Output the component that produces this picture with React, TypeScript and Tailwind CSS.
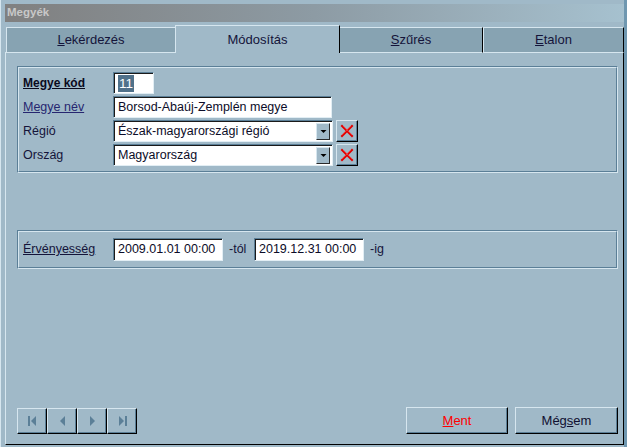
const font = "font-['Liberation_Sans',Arial,sans-serif]";

const Raised = ({ className = "", children }: { className?: string; children?: React.ReactNode }) => (
  <div
    className={`flex items-center justify-center border-t border-l border-t-[#d6e6ef] border-l-[#d6e6ef] border-r border-b border-r-black border-b-black shadow-[inset_-1px_-1px_0_#5b7f97] bg-[#a0b9c8] ${className}`}
  >
    {children}
  </div>
);

const Field = ({ className = "", children }: { className?: string; children?: React.ReactNode }) => (
  <div
    className={`flex items-center bg-white border-t border-l border-t-[#5b7f97] border-l-[#5b7f97] border-r border-b border-r-[#e2eef4] border-b-[#e2eef4] shadow-[inset_1px_1px_0_#1a1a1a] pl-[4px] text-[12.5px] text-[#0c0c28] whitespace-nowrap ${className}`}
  >
    {children}
  </div>
);

const Group = ({ className = "", children }: { className?: string; children?: React.ReactNode }) => (
  <div className="border-t border-l border-t-[#5b7f97] border-l-[#5b7f97] border-r border-b border-r-[#d6e6ef] border-b-[#d6e6ef]">
    <div className={`border-t border-l border-t-[#d6e6ef] border-l-[#d6e6ef] border-r border-b border-r-[#5b7f97] border-b-[#5b7f97] ${className}`}>
      {children}
    </div>
  </div>
);

const Combo = ({ value }: { value: string }) => (
  <div className="flex items-center">
    <Field className="w-[220px] h-[22px] pr-[2px] justify-between">
      <span>{value}</span>
      <div className="w-[14px] h-[17px] flex items-center justify-center border-t border-l border-t-[#d6e6ef] border-l-[#d6e6ef] border-r border-b border-r-[#2a2a2a] border-b-[#2a2a2a] bg-[#a0b9c8]">
        <svg width="7" height="5" viewBox="0 0 7 5">
          <path d="M0.5 1h6l-3 3z" fill="#000" />
        </svg>
      </div>
    </Field>
    <Raised className="ml-[3px] w-[22px] h-[22px]">
      <svg width="14" height="14" viewBox="0 0 14 14">
        <path d="M2 2l10 10M12 2L2 12" stroke="#e00000" strokeWidth="2" strokeLinecap="square" />
        <path d="M3 2l9 9M11 2L2 11" stroke="#ff5050" strokeWidth="0.6" />
      </svg>
    </Raised>
  </div>
);

const Row = ({ label, children }: { label: React.ReactNode; children: React.ReactNode }) => (
  <div className="flex items-center h-[22px]">
    <div className="w-[90px] text-[12.5px]">{label}</div>
    {children}
  </div>
);

const NavIcon = ({ kind }: { kind: "first" | "prev" | "next" | "last" }) => (
  <svg width="9" height="10" viewBox="0 0 9 10">
    {kind === "first" && <><rect x="0" y="0" width="2" height="10" fill="#5b7f97" /><path d="M8 0v10L3 5z" fill="#5b7f97" /></>}
    {kind === "prev" && <path d="M7 0v10L2 5z" fill="#5b7f97" />}
    {kind === "next" && <path d="M2 0v10L7 5z" fill="#5b7f97" />}
    {kind === "last" && <><path d="M1 0v10L6 5z" fill="#5b7f97" /><rect x="7" y="0" width="2" height="10" fill="#5b7f97" /></>}
  </svg>
);

export default function App() {
  return (
    <div className={`w-[627px] h-[447px] bg-[#a0b9c8] flex flex-col border-l border-l-[#d6e6ef] border-r-[3px] border-r-[#6f97b0] pl-[4px] pt-[4px] pb-[2px] ${font} text-[#14143a]`}>
      {/* title bar */}
      <div className="h-[18px] flex items-center pl-[2px] bg-gradient-to-r from-[#808080] via-[#8d9ba4] to-[#a6c1cf] text-[11.5px] font-bold text-[#c8c8c8]">
        Megyék
      </div>

      {/* tabs */}
      <div className="mt-[3px] h-[28px] flex items-end">
        <div className="w-[1px] h-[1px] bg-[#d6e6ef]" />
        <div className="w-[169px] h-[26px] bg-[#87a3b2] border-t border-l border-t-[#d6e6ef] border-l-[#d6e6ef] border-b border-b-[#d6e6ef] flex items-center justify-center text-[13px]">
          <span><span className="underline">L</span>ekérdezés</span>
        </div>
        <div className="w-[165px] h-[28px] border-t border-l border-t-[#d6e6ef] border-l-[#d6e6ef] border-r border-r-black flex items-start justify-center pt-[4px] text-[13px]">
          Módosítás
        </div>
        <div className="w-[143px] h-[26px] bg-[#87a3b2] border-t border-t-[#d6e6ef] border-b border-b-[#d6e6ef] border-r border-r-black flex items-center justify-center text-[13px]">
          <span><span className="underline">S</span>zűrés</span>
        </div>
        <div className="flex-1 h-[26px] bg-[#87a3b2] border-t border-l border-t-[#d6e6ef] border-l-[#d6e6ef] border-b border-b-[#d6e6ef] border-r border-r-black flex items-center justify-center text-[13px]">
          <span><span className="underline">E</span>talon</span>
        </div>
      </div>

      {/* panel */}
      <div className="flex-1 flex flex-col border-l border-l-[#d6e6ef] border-r border-r-black border-b border-b-black pl-[11px] pr-[5px] pt-[13px] pb-[10px]">
        <Group className="h-[105px] pt-[4px] pl-[4px] flex flex-col gap-[2px]">
          <Row label={<span className="font-bold underline text-[12px] text-[#0a0a1e]">Megye kód</span>}>
            <Field className="w-[41px] h-[22px] pl-[3px]">
              <span className="bg-[#50718a] text-white text-[13.5px] px-px leading-[17px]">11</span>
            </Field>
          </Row>
          <Row label={<span className="underline text-[#262670]">Megye név</span>}>
            <Field className="w-[219px] h-[22px]">Borsod-Abaúj-Zemplén megye</Field>
          </Row>
          <Row label="Régió">
            <Combo value="Észak-magyarországi régió" />
          </Row>
          <Row label="Ország">
            <Combo value="Magyarország" />
          </Row>
        </Group>

        <div className="mt-[57px]">
          <Group className="h-[37px] pl-[4px] flex items-center">
            <div className="w-[90px] text-[12.5px] underline">Érvényesség</div>
            <Field className="w-[110px] h-[23px]">2009.01.01 00:00</Field>
            <span className="w-[31px] pl-[6px] text-[12.5px]">-tól</span>
            <Field className="w-[110px] h-[23px]">2019.12.31 00:00</Field>
            <span className="pl-[6px] text-[12.5px]">-ig</span>
          </Group>
        </div>

        <div className="flex-1" />

        <div className="flex items-end justify-between">
          <div className="flex">
            <Raised className="w-[30px] h-[26px]"><NavIcon kind="first" /></Raised>
            <Raised className="w-[30px] h-[26px]"><NavIcon kind="prev" /></Raised>
            <Raised className="w-[30px] h-[26px]"><NavIcon kind="next" /></Raised>
            <Raised className="w-[30px] h-[26px]"><NavIcon kind="last" /></Raised>
          </div>
          <div className="flex gap-[7px]">
            <Raised className="w-[102px] h-[27px] text-[13px] text-[#ff0000]">
              <span><span className="underline">M</span>ent</span>
            </Raised>
            <Raised className="w-[103px] h-[27px] text-[13px] text-[#101030]">
              <span>Még<span className="underline">s</span>em</span>
            </Raised>
          </div>
        </div>
      </div>
    </div>
  );
}
